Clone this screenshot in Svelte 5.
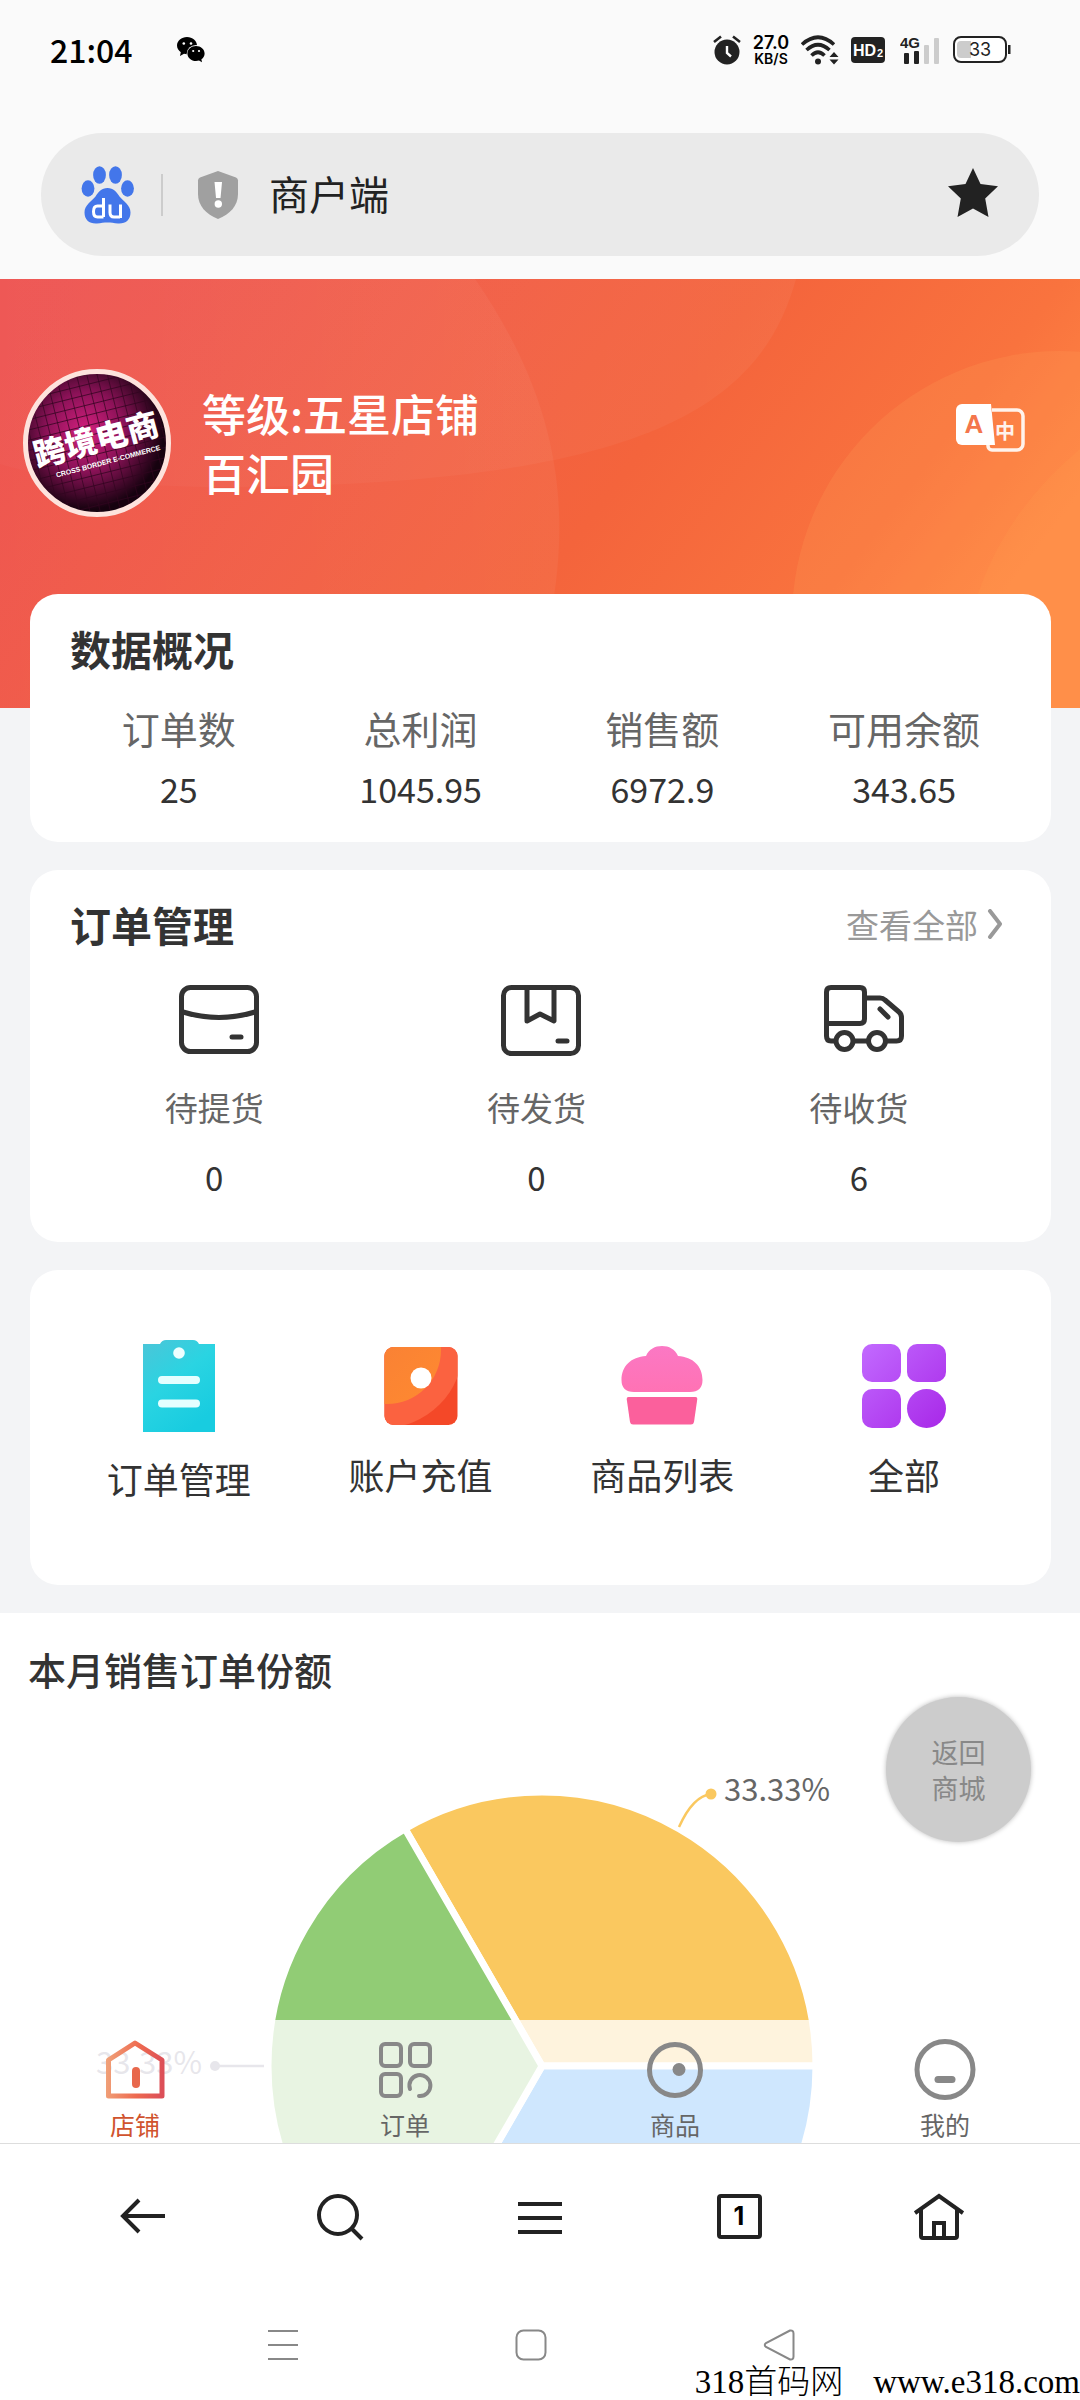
<script>
  const stats = [
    { label: '订单数', value: '25' },
    { label: '总利润', value: '1045.95' },
    { label: '销售额', value: '6972.9' },
    { label: '可用余额', value: '343.65' }
  ];
  const orders = [
    { icon: 'pickup', label: '待提货', count: 0 },
    { icon: 'ship', label: '待发货', count: 0 },
    { icon: 'truck', label: '待收货', count: 6 }
  ];
  const shortcuts = [
    { icon: 'clipboard', label: '订单管理' },
    { icon: 'recharge', label: '账户充值' },
    { icon: 'goods', label: '商品列表' },
    { icon: 'all', label: '全部' }
  ];
  const tabs = [
    { icon: 'shop', label: '店铺' },
    { icon: 'orders', label: '订单' },
    { icon: 'goods', label: '商品' },
    { icon: 'me', label: '我的' }
  ];
</script>

<div class="page">
  <div class="status">
    <span class="time">21:04</span>
    <svg class="wechat" width="28" height="26" viewBox="0 0 28 26" aria-hidden="true">
      <path d="M10 0C4.500 0 0 3.800 0 8.600c0 2.700 1.500 5 3.800 6.600L3 19l4-2.200c1 .3 2 .4 3 .4 5.500 0 10-3.800 10-8.600S15.500 0 10 0z" fill="#000" />
      <ellipse cx="19" cy="16.500" rx="9.300" ry="8.600" fill="#fafafa" />
      <path d="M19 9c-4.800 0-8.600 3.300-8.600 7.400S14.200 24 19 24c1 0 2-.2 3-.5l3 1.700-.6-3c2-1.400 3.200-3.400 3.200-5.800C27.600 12.300 23.800 9 19 9z" fill="#000" />
      <circle cx="6.800" cy="6.500" r="1.300" fill="#fff" /><circle cx="14" cy="6.500" r="1.300" fill="#fff" />
      <circle cx="16.200" cy="14" r="1.100" fill="#fff" /><circle cx="22" cy="14" r="1.100" fill="#fff" />
    </svg>
    <div class="sys">
      <svg width="28" height="30" viewBox="0 0 28 30" aria-hidden="true">
        <circle cx="14" cy="17" r="12.500" fill="#222" />
        <path d="M1 7l7-5.500M27 7l-7-5.500" stroke="#222" stroke-width="2.600" />
        <path d="M14 11v7l4 3.500" fill="none" stroke="#fff" stroke-width="2.400" />
      </svg>
      <span class="rate"><b>27.0</b><b class="unit">KB/S</b></span>
      <svg class="wifi" width="38" height="30" viewBox="0 0 38 30" aria-hidden="true">
        <g fill="none" stroke="#222" stroke-width="3.600">
          <path d="M1 9.500Q17 -5 33 9.500" /><path d="M5.500 15Q17 4.500 28.500 15" /><path d="M10.500 20.500Q17 14 23.500 20.500" />
        </g>
        <circle cx="17" cy="26.500" r="3" fill="#222" />
        <path d="M28.500 22l4.500-5 4.500 5zM28.500 24.500l4.500 5 4.500-5z" fill="#222" />
      </svg>
      <svg class="hd" width="34" height="26" viewBox="0 0 34 26" aria-hidden="true">
        <rect width="34" height="26" rx="4" fill="#222" />
        <text x="2" y="19" class="hdt">HD</text><text x="26" y="20" class="hds">2</text>
      </svg>
      <svg class="sig" width="41" height="30" viewBox="0 0 41 30" aria-hidden="true">
        <text x="0" y="13" class="g4">4G</text>
        <rect x="4" y="18" width="5" height="11" rx="1" fill="#222" /><rect x="14" y="16" width="5" height="13" rx="1" fill="#222" />
        <rect x="24" y="10" width="5" height="19" rx="1" fill="#ccc" /><rect x="34" y="3" width="5" height="26" rx="1" fill="#ccc" />
      </svg>
      <svg class="bat" width="58" height="28" viewBox="0 0 58 28" aria-hidden="true">
        <rect x="1" y="1" width="52" height="25" rx="7" fill="#fff" stroke="#222" stroke-width="2" />
        <path d="M8 5h10v17H8a4 4 0 0 1-4-4V9a4 4 0 0 1 4-4z" fill="#ccc" />
        <rect x="55" y="9" width="2.500" height="9" fill="#222" />
        <text x="27" y="20" text-anchor="middle" class="batt">33</text>
      </svg>
    </div>
  </div>

  <div class="address">
    <svg width="54" height="58" viewBox="0 0 54 58" aria-hidden="true">
      <g fill="#4376ea">
        <ellipse cx="7" cy="22.500" rx="6.400" ry="8.300" /><ellipse cx="18.500" cy="9" rx="6.400" ry="8.700" />
        <ellipse cx="34.500" cy="9" rx="6.400" ry="8.700" /><ellipse cx="46.500" cy="22.500" rx="6.400" ry="8.300" />
        <path d="M26.500 22c6 0 9 4 12 8.500 4 5 11 8.500 11 16S44.500 58 37 57.500c-4-.4-7-1-10.500-1s-6.500.6-10.500 1C8.500 58 3.500 54 3.500 46.500s7-11 11-16C17.500 26 20.500 22 26.500 22z" />
      </g>
      <g fill="none" stroke="#fff" stroke-width="3">
        <path d="M22.500 32v19M22.500 40h-6q-4 0-4 5.500t4 5.500h6M29 38.500v8q0 4.500 4 4.500h6M39.500 38.500v13.500" />
      </g>
    </svg>
    <span class="sep"></span>
    <svg width="42" height="50" viewBox="0 0 42 50" aria-hidden="true">
      <path d="M21 1l18 6.500q2 1 2 3V24c0 12-8 20-20 25C9 44 1 36 1 24V10.500q0-2 2-3z" fill="#a0a0a0" />
      <path d="M17.500 12h7.500l-1.500 16h-4.500z" fill="#fff" /><circle cx="21.300" cy="34" r="3.700" fill="#fff" />
    </svg>
    <span class="title">商户端</span>
    <button class="star" aria-label="收藏">
      <svg width="52" height="50" viewBox="0 0 52 50"><path d="M26 0l7.500 16 17.500 2.200-12.800 12.300L41.500 49 26 40.500 10.500 49l3.300-18.500L1 18.200 18.500 16z" fill="#222" /></svg>
    </button>
  </div>

  <main>
    <header class="hero">
      <svg class="backdrop" viewBox="0 0 1080 429" preserveAspectRatio="none" aria-hidden="true">
        <defs>
          <linearGradient id="hero" x1="0" y1="0.200" x2="1" y2="0.500">
            <stop offset="0" stop-color="#ee524f" /><stop offset="0.600" stop-color="#f4643c" /><stop offset="0.850" stop-color="#f9733e" /><stop offset="1" stop-color="#ff8644" />
          </linearGradient>
          <linearGradient id="veil" x1="0" y1="0" x2="1" y2="0">
            <stop offset="0" stop-color="#fff" stop-opacity="0.020" /><stop offset="1" stop-color="#fff" stop-opacity="0.045" />
          </linearGradient>
        </defs>
        <rect width="1080" height="429" fill="url(#hero)" />
        <path d="M0 0h796C760 130 640 208 206 208 120 206 50 200 0 185z" fill="url(#veil)" />
        <path d="M0 0h475c90 130 110 260 50 429H0z" fill="url(#veil)" />
        <circle cx="1060" cy="340" r="268" fill="#ffa058" fill-opacity="0.220" />
        <path d="M1080 170q-120 100-120 259h120z" fill="#ffa050" fill-opacity="0.180" />
      </svg>
      <svg class="avatar" viewBox="0 0 148 148" role="img" aria-label="跨境电商">
        <defs>
          <radialGradient id="av" cx="0.420" cy="0.420" r="0.550">
            <stop offset="0" stop-color="#d4207e" /><stop offset="0.500" stop-color="#8c1258" /><stop offset="1" stop-color="#16020f" />
          </radialGradient>
          <pattern id="grid" width="10" height="10" patternUnits="userSpaceOnUse" patternTransform="rotate(-14)">
            <path d="M0 0H10M0 0V10" stroke="#30031e" stroke-width="1.400" />
          </pattern>
        </defs>
        <circle cx="74" cy="74" r="71" fill="url(#av)" />
        <circle cx="74" cy="74" r="71" fill="url(#grid)" />
        <circle cx="74" cy="74" r="71.500" fill="none" stroke="#fde3dd" stroke-width="5" />
        <g transform="rotate(-15 74 74)" fill="#fff" text-anchor="middle">
          <text x="74" y="82" class="av1">跨境电商</text>
          <text x="80" y="97" class="av2">CROSS BORDER E-COMMERCE</text>
        </g>
      </svg>
      <div class="who">
        <div>等级:五星店铺</div>
        <div>百汇园</div>
      </div>
      <button class="lang" aria-label="切换语言">
        <svg width="70" height="50" viewBox="0 0 70 50">
          <path d="M37 6h25a6 6 0 0 1 6 6v28a6 6 0 0 1-6 6H37a4 4 0 0 1-4-4V12" fill="none" stroke="#fff3ec" stroke-width="3.500" />
          <path d="M7 0h29l4 41H7a6 6 0 0 1-6-6V6a6 6 0 0 1 6-6z" fill="#fff" />
          <text x="19" y="29" text-anchor="middle" class="la">A</text>
          <text x="50" y="35" text-anchor="middle" class="lz">中</text>
        </svg>
      </button>
    </header>

    <div class="cards">
      <section class="card overview">
        <h2>数据概况</h2>
        <div class="four">
          {#each stats as s}
            <div class="stat"><span class="label">{s.label}</span><span class="value">{s.value}</span></div>
          {/each}
        </div>
      </section>

      <section class="card manage">
        <div class="head">
          <h2>订单管理</h2>
          <a href="#orders">查看全部<svg width="16" height="30" viewBox="0 0 16 30" aria-hidden="true"><path d="M3 2l10 13L3 28" fill="none" stroke="#999" stroke-width="4" stroke-linecap="round" stroke-linejoin="round" /></svg></a>
        </div>
        <div class="three">
          {#each orders as o}
            <button class="order">
              <svg width="80" height="80" viewBox="0 0 80 80" fill="none" stroke="#333" stroke-width="5" stroke-linejoin="round" stroke-linecap="round" aria-hidden="true">
                {#if o.icon === 'pickup'}
                  <rect x="2.500" y="7.500" width="75" height="64" rx="9" /><path d="M4 32q36 11 72 0" stroke-linecap="butt" /><path d="M53 57h9" />
                {:else if o.icon === 'ship'}
                  <rect x="2.500" y="7.500" width="75" height="66" rx="8" /><path d="M26 8v33l13-7 14 7V8" /><path d="M57 61h9" />
                {:else}
                  <path d="M11 61H7q-4.500 0-4.500-5V12q0-4.500 4.500-4.500h29q4.500 0 4.500 4.500v27q0 4.500-4.500 4.500H3M42 18h14q3 0 5 2l14 12q2.500 2 2.500 6v18q0 5-5 5h-10M30 61h13" />
                  <circle cx="20.500" cy="61" r="8.500" /><circle cx="53" cy="61" r="8.500" /><path d="M56 29l8 8" />
                {/if}
              </svg>
              <span class="label">{o.label}</span><span class="count">{o.count}</span>
            </button>
          {/each}
        </div>
      </section>

      <section class="card quick">
        <div class="four">
          {#each shortcuts as q}
            <button class="short">
              {#if q.icon === 'clipboard'}
                <svg width="72" height="92" viewBox="0 0 72 92" aria-hidden="true">
                  <defs><linearGradient id="cy" x1="0" y1="0" x2="0.600" y2="1"><stop offset="0" stop-color="#4cc5d8" /><stop offset="0.500" stop-color="#2ad4e2" /><stop offset="1" stop-color="#18cce0" /></linearGradient></defs>
                  <path d="M0 4h17q2-4 6-4h27q4 0 6 4h16v88H0z" fill="url(#cy)" />
                  <circle cx="36" cy="13" r="5.800" fill="#eeffff" />
                  <path d="M19 40h34M19 63.500h34" stroke="#e4ffff" stroke-width="8" stroke-linecap="round" />
                </svg>
              {:else if q.icon === 'recharge'}
                <svg width="84" height="88" viewBox="0 0 84 88" aria-hidden="true">
                  <defs>
                    <clipPath id="rc"><rect x="5.500" y="7" width="73" height="78" rx="9" /></clipPath>
                    <linearGradient id="or" x1="0" y1="0" x2="1" y2="1"><stop offset="0" stop-color="#f57a38" /><stop offset="1" stop-color="#ff8a30" /></linearGradient>
                  </defs>
                  <g clip-path="url(#rc)"><rect width="84" height="88" fill="#f44828" /><circle cx="4" cy="8" r="80" fill="#fb6240" /><circle cx="8" cy="10" r="54" fill="url(#or)" /></g>
                  <circle cx="42" cy="38" r="10.500" fill="#fff" />
                </svg>
              {:else if q.icon === 'goods'}
                <svg width="84" height="88" viewBox="0 0 84 88" aria-hidden="true">
                  <defs><linearGradient id="pk" x1="0" y1="0" x2="0" y2="1"><stop offset="0" stop-color="#fb78c4" /><stop offset="1" stop-color="#ff72b4" /></linearGradient></defs>
                  <path d="M14 52Q1.500 52 1.500 40C1.500 26 11 17 26 16 29 9 35 6 42 6s13 3 16 10c15 1 24.500 10 24.500 24q0 12-12.500 12z" fill="url(#pk)" />
                  <path d="M8.500 57h67q2 0 1.800 2l-3.300 23q-.5 2.500-3 2.500H13q-2.500 0-3-2.500L6.700 59q-.2-2 1.800-2z" fill="#fb609c" />
                </svg>
              {:else}
                <svg width="84" height="88" viewBox="0 0 84 88" aria-hidden="true">
                  <defs><linearGradient id="pu" gradientUnits="userSpaceOnUse" x1="0" y1="4" x2="84" y2="88"><stop offset="0" stop-color="#c26aff" /><stop offset="1" stop-color="#a828e8" /></linearGradient></defs>
                  <g fill="url(#pu)"><rect y="4" width="39" height="38" rx="10" /><rect x="45" y="4" width="39" height="38" rx="10" /><rect y="49" width="39" height="39" rx="10" /><circle cx="64.500" cy="68.500" r="19.500" /></g>
                </svg>
              {/if}
              <span>{q.label}</span>
            </button>
          {/each}
        </div>
      </section>
    </div>

    <section class="chart">
      <h3>本月销售订单份额</h3>
      <svg class="pie" viewBox="0 0 1080 440" role="img" aria-label="本月销售订单份额">
        <g stroke="#fff" stroke-width="7" stroke-linejoin="round">
          <path d="M542 362L405 124.700A274 274 0 0 1 816 362z" fill="#fac85f" />
          <path d="M542 362H816A274 274 0 0 1 405 599.300z" fill="#1f8ffb" />
          <path d="M542 362L405 599.300A274 274 0 0 1 405 124.700z" fill="#91cc75" />
        </g>
        <path d="M679 123Q693 92 711 90" fill="none" stroke="#fac85f" stroke-width="2.500" /><circle cx="711" cy="90" r="5.500" fill="#fac85f" />
        <text x="724" y="97" class="pct">33.33%</text>
        <path d="M215 362h49" stroke="#8f8aa0" stroke-width="2.500" /><circle cx="215" cy="362" r="5" fill="#8f8aa0" />
        <text x="202" y="370" text-anchor="end" class="pct faint">33.33%</text>
      </svg>
      <button class="back">返回<br />商城</button>
      <nav class="tabs">
        {#each tabs as t, i}
          <a href="#{t.icon}" class:active={i === 0}>
            <svg width="64" height="64" viewBox="0 0 64 64" fill="none" stroke="#888" stroke-width="5" stroke-linejoin="round" stroke-linecap="round" aria-hidden="true">
              {#if t.icon === 'shop'}
                <defs><linearGradient id="sh" gradientUnits="userSpaceOnUse" x1="4" y1="30" x2="60" y2="34"><stop offset="0" stop-color="#f0a078" /><stop offset="0.550" stop-color="#ee6a50" /><stop offset="1" stop-color="#dc4f58" /></linearGradient></defs>
                <path d="M5.500 23L32 6l27 17v36H5.500z" stroke="url(#sh)" /><path d="M33 34v13" stroke="#e8684c" stroke-width="8" />
              {:else if t.icon === 'orders'}
                <g stroke-width="4"><rect x="8" y="7" width="20" height="22" rx="4" /><rect x="37" y="7" width="20" height="22" rx="4" /><rect x="8" y="37" width="20" height="22" rx="4" /><path d="M37 52a10.500 10.500 0 1 1 9 7" /></g>
              {:else if t.icon === 'goods'}
                <circle cx="32" cy="33" r="25.500" /><circle cx="36" cy="32.500" r="6.500" fill="#888" stroke="none" />
              {:else}
                <circle cx="32" cy="32.500" r="28" /><path d="M25 42.500h14" stroke-width="7" />
              {/if}
            </svg>
            <span>{t.label}</span>
          </a>
        {/each}
      </nav>
    </section>
  </main>

  <nav class="browser">
    <button aria-label="后退"><svg width="50" height="50" viewBox="0 0 50 50"><path d="M49 24H6M23 8L7 24l16 16" /></svg></button>
    <button aria-label="搜索"><svg width="50" height="50" viewBox="0 0 50 50"><circle cx="23" cy="23" r="19" /><path d="M36 36l11 11" /></svg></button>
    <button aria-label="菜单"><svg width="50" height="50" viewBox="0 0 50 50"><path d="M3 12h44M3 26h44M3 40h44" /></svg></button>
    <button aria-label="标签页"><svg width="50" height="50" viewBox="0 0 50 50"><rect x="4" y="4" width="41" height="41" rx="2" /><text x="24" y="33" text-anchor="middle" class="one">1</text></svg></button>
    <button aria-label="主页"><svg width="50" height="50" viewBox="0 0 50 50"><path d="M1 21L25 4l24 17M7 18v26q0 2 2 2h32q2 0 2-2V18M20 46V31h10v15" /></svg></button>
  </nav>

  <div class="system">
    <button aria-label="最近任务"><svg width="32" height="32" viewBox="0 0 32 32"><path d="M1 2h30M1 16h30M1 30h30" /></svg></button>
    <button aria-label="桌面"><svg width="32" height="32" viewBox="0 0 32 32"><rect x="1.500" y="1.500" width="29" height="29" rx="7" /></svg></button>
    <button aria-label="返回"><svg width="32" height="32" viewBox="0 0 32 32"><path d="M27 1.500L3 14q-2.500 2 0 4L27 30.500q3.500.5 3.500-3v-23q0-3.500-3.500-3z" /></svg></button>
  </div>

  <div class="mark"><span>318首码网</span><span>www.e318.com</span></div>
</div>

<style>
  :global(body) { margin: 0; background: #fff; }
  .page {
    position: relative;
    background: #fff;
    color: #333;
    font-family: "Noto Sans CJK SC", sans-serif;
  }
  button { border: 0; padding: 0; background: none; font: inherit; color: inherit; cursor: pointer; }
  a { color: inherit; text-decoration: none; }
  h2, h3 { margin: 0; }
  svg { display: block; flex: none; }

  .page::before { content: ""; position: absolute; inset: 0 0 auto; height: 279px; background: #fafafa; }
  .status { position: relative; display: flex; align-items: center; height: 52px; padding: 24px 69px 57px 50px; color: #000; }
  .time { margin-right: 44px; padding-bottom: 2px; font-size: 32px; font-weight: 500; }
  .sys { display: flex; align-items: center; margin-left: auto; }
  .rate { display: flex; flex-direction: column; align-items: center; width: 40px; margin: 0 10px; font-family: Inter, sans-serif; font-size: 18px; line-height: 18px; }
  .rate b { font-weight: 600; }
  .rate .unit { font-size: 14px; line-height: 14px; }
  .hd { margin: 0 15px 0 12px; }
  .bat { margin-left: 12px; }
  .hdt { font: 700 16px "Liberation Sans", sans-serif; fill: #fff; }
  .hds { font: 700 11px "Liberation Sans", sans-serif; fill: #fff; }
  .g4 { font: 700 15px "Liberation Sans", sans-serif; fill: #222; }
  .batt { font: 400 18px Inter, sans-serif; fill: #222; }

  .address { position: relative; display: flex; align-items: center; box-sizing: border-box; height: 123px; padding: 0 40px; border-radius: 62px; margin: 0 41px; background: #eaeaea; }
  .sep { width: 2px; height: 42px; margin: 0 34px 0 26px; background: #ccc; }
  .title { margin-left: 30px; padding-bottom: 4px; font-size: 40px; color: #222; }
  .star { margin-left: auto; padding-bottom: 4px; }

  main { position: relative; margin-top: 23px; background: #f3f4f6; }
  .hero { position: relative; display: flex; align-items: center; padding: 90px 55px 191px 23px; }
  .backdrop { position: absolute; inset: 0; width: 100%; height: 100%; }
  .avatar { position: relative; width: 148px; height: 148px; }
  .av1 { font-size: 32px; font-weight: 900; }
  .av2 { font: 700 7px "Liberation Sans", sans-serif; }
  .who { position: relative; margin-left: 31px; font-size: 44px; line-height: 59px; font-weight: 500; color: #fff; }
  .lang { position: relative; margin: 0 0 28px auto; }
  .la { font: 700 26px "Liberation Sans", sans-serif; fill: #f4764c; }
  .lz { font-size: 20px; font-weight: 700; fill: #fff3ec; }

  .cards { position: relative; display: flex; flex-direction: column; gap: 28px; margin-top: -114px; padding: 0 29px 28px 30px; }
  .card { border-radius: 28px; background: #fff; padding: 24px 26px 28px 28px; }
  h2 { padding-left: 12px; font-size: 41px; line-height: 60px; font-weight: 700; }
  .four { display: grid; grid-template-columns: repeat(4, 1fr); }
  .three { display: grid; grid-template-columns: repeat(3, 1fr); }
  .stat { display: flex; flex-direction: column; align-items: center; gap: 11px; padding-top: 25px; line-height: 50px; }
  .stat .label { font-size: 38px; color: #666; }
  .value { font-size: 34px; }

  .manage { padding-bottom: 41px; }
  .head { display: flex; justify-content: space-between; align-items: center; }
  .head a { display: flex; align-items: center; gap: 9px; padding-right: 22px; font-size: 33px; line-height: 50px; color: #999; }
  .order { display: flex; flex-direction: column; align-items: center; padding-top: 26px; font-size: 33px; line-height: 48px; }
  .order span { padding-right: 10px; }
  .order .label { margin: 23px 0 22px; color: #666; }

  .quick { padding-top: 70px; padding-bottom: 82px; }
  .short { display: flex; flex-direction: column; align-items: center; gap: 21px; font-size: 36px; line-height: 50px; }

  .chart { position: relative; background: #fff; overflow: hidden; }
  h3 { padding: 26px 28px 5px; font-size: 38px; line-height: 60px; font-weight: 500; }
  .pie { width: 100%; }
  .pct { font-size: 31px; fill: #666; }
  .faint { fill: #8f8aa0; }
  .back { position: absolute; top: 84px; right: 49px; width: 145px; height: 145px; border-radius: 50%; background: #ccc; box-shadow: 0 0 5px #bbb; font-size: 27px; line-height: 36px; color: #888; }
  .tabs { position: absolute; inset: auto 0 0; display: grid; grid-template-columns: repeat(4, 1fr); padding: 17px 0 2px; background: rgba(255, 255, 255, 0.79); border-bottom: 1px solid #ddd; }
  .tabs a { display: flex; flex-direction: column; align-items: center; gap: 6px; font-size: 25px; line-height: 34px; color: #666; }
  .tabs .active { color: #d0532e; }

  .browser { display: grid; grid-template-columns: repeat(5, 1fr); justify-items: center; padding: 48px 41px 0; }
  .browser svg { fill: none; stroke: #222; stroke-width: 4; }
  .browser .one { font: 700 25px Inter, sans-serif; fill: #000; stroke: none; }
  .system { display: flex; justify-content: center; gap: 216px; padding: 87px 18px 39px 0; }
  .system svg { fill: none; stroke: #888; stroke-width: 2; }
  .mark { position: absolute; right: 0; bottom: 0; display: flex; gap: 30px; font: 300 33px/36px "Liberation Serif", "Noto Sans CJK SC", serif; color: #000; }
</style>
